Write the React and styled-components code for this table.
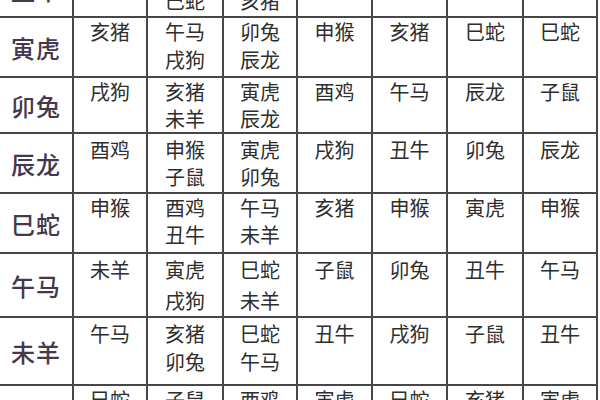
import React from "react";
import styled, { createGlobalStyle } from "styled-components";

const Global = createGlobalStyle`
  html, body { margin: 0; padding: 0; background: #fff; }
  body { width: 600px; height: 400px; overflow: hidden; font-family: "Noto Sans CJK SC", sans-serif; }
`;

const Viewport = styled.div`
  width: 600px;
  height: 400px;
  overflow: hidden;
  background: #fff;
`;

const Grid = styled.div`
  display: grid;
  grid-template-columns: 72px 72px 74px 72px 73px 73px 74px 72px;
  gap: 2px;
  padding: 2px;
  background: #474747;
  margin: -44px 0 0 -2px;
  width: max-content;
`;

const LabelCell = styled.div`
  background: #fff;
  height: ${(p) => p.$h}px;
  display: flex;
  align-items: center;
  justify-content: center;
  padding-top: ${(p) => p.$shift || 0}px;
  box-sizing: border-box;
  font-family: "Noto Sans CJK SC", sans-serif;
  font-weight: 500;
  font-size: 24px;
  color: #45384d;
  letter-spacing: 1px;
`;

const Cell = styled.div`
  background: #fff;
  height: ${(p) => p.$h}px;
  box-sizing: border-box;
  padding-top: ${(p) => p.$pad}px;
  display: flex;
  flex-direction: column;
  align-items: center;
  font-family: "Noto Sans CJK SC", sans-serif;
  font-size: 20px;
  line-height: ${(p) => p.$lh}px;
  color: #2e2e2e;
`;

const Line = styled.span`
  display: block;
  white-space: nowrap;
`;

const rows = [
  { label: "丑牛", h: 58, pad: 1, lh: 28, shift: 4, cells: [["子鼠"], ["酉鸡", "巳蛇"], ["子鼠", "亥猪"], ["未羊"], ["辰龙"], ["午马"], ["戌狗"]] },
  { label: "寅虎", h: 58, pad: 0, lh: 28, cells: [["亥猪"], ["午马", "戌狗"], ["卯兔", "辰龙"], ["申猴"], ["亥猪"], ["巳蛇"], ["巳蛇"]] },
  { label: "卯兔", h: 54, pad: 0, lh: 27, cells: [["戌狗"], ["亥猪", "未羊"], ["寅虎", "辰龙"], ["酉鸡"], ["午马"], ["辰龙"], ["子鼠"]] },
  { label: "辰龙", h: 58, pad: 2, lh: 27, cells: [["酉鸡"], ["申猴", "子鼠"], ["寅虎", "卯兔"], ["戌狗"], ["丑牛"], ["卯兔"], ["辰龙"]] },
  { label: "巳蛇", h: 58, pad: 0, lh: 27, cells: [["申猴"], ["酉鸡", "丑牛"], ["午马", "未羊"], ["亥猪"], ["申猴"], ["寅虎"], ["申猴"]] },
  { label: "午马", h: 62, pad: 0, lh: 31, cells: [["未羊"], ["寅虎", "戌狗"], ["巳蛇", "未羊"], ["子鼠"], ["卯兔"], ["丑牛"], ["午马"]] },
  { label: "未羊", h: 66, pad: 2, lh: 28, cells: [["午马"], ["亥猪", "卯兔"], ["巳蛇", "午马"], ["丑牛"], ["戌狗"], ["子鼠"], ["丑牛"]] },
  { label: "申猴", h: 58, pad: 0, lh: 28, cells: [["巳蛇"], ["子鼠", "辰龙"], ["酉鸡", "戌狗"], ["寅虎"], ["巳蛇"], ["亥猪"], ["寅虎"]] },
];

export default function App() {
  return (
    <Viewport>
      <Global />
      <Grid>
        {rows.map((r) => (
          <React.Fragment key={r.label}>
            <LabelCell $h={r.h} $shift={r.shift}>{r.label}</LabelCell>
            {r.cells.map((c, i) => (
              <Cell key={i} $h={r.h} $pad={r.pad} $lh={r.lh}>
                {c.map((t, j) => (
                  <Line key={j}>{t}</Line>
                ))}
              </Cell>
            ))}
          </React.Fragment>
        ))}
      </Grid>
    </Viewport>
  );
}
